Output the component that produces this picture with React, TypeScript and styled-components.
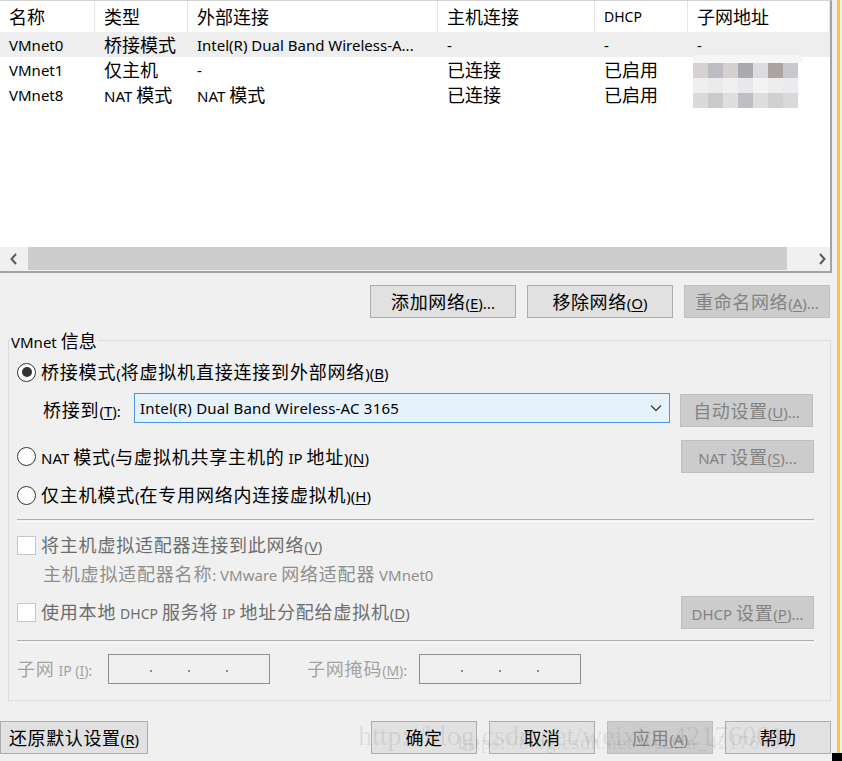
import React from 'react';
import styled, { createGlobalStyle } from 'styled-components';

const Global = createGlobalStyle`
  html, body { margin: 0; padding: 0; background: #f0f0f0; }
  body {
    font-family: "Noto Sans", "Noto Sans CJK SC", sans-serif;
    font-size: 15px;
    line-height: 22px;
    color: #000;
  }
  #root { width: 842px; height: 761px; }
`;

const Han = styled.span`
  font-family: "Noto Sans CJK SC", sans-serif;
  font-size: 18px;
  letter-spacing: var(--hs, 0px);
`;
const Small = styled.span`
  font-size: 14px;
`;
const Mn = styled.span`
  text-decoration: underline;
  text-underline-offset: 2px;
`;

const TOKEN = /(&.)|\{([^}]*)\}|([\u2e80-\u9fff\u3000-\u303f\uff00-\uffef]+)|([^&{\u2e80-\u9fff\u3000-\u303f\uff00-\uffef]+)/g;

function parse(s: string, prefix: string): React.ReactNode[] {
  const out: React.ReactNode[] = [];
  const re = new RegExp(TOKEN.source, 'g');
  let m: RegExpExecArray | null;
  let i = 0;
  while ((m = re.exec(s))) {
    const k = `${prefix}${i++}`;
    if (m[1]) out.push(<Mn key={k}>{m[1][1]}</Mn>);
    else if (m[2] !== undefined) out.push(<Small key={k}>{parse(m[2], k + '-')}</Small>);
    else if (m[3]) out.push(<Han key={k}>{m[3]}</Han>);
    else out.push(<React.Fragment key={k}>{m[4]}</React.Fragment>);
  }
  return out;
}

function Txt({ s }: { s: string }) {
  return <span>{parse(s, 't')}</span>;
}

const Page = styled.div`
  position: relative;
  display: flex;
  width: 842px;
  height: 761px;
  overflow: hidden;
`;
const Main = styled.div`
  width: 832px;
  display: flex;
  flex-direction: column;
`;
const Strip = styled.div`
  width: 10px;
  box-sizing: border-box;
  padding-left: 5px;
  display: flex;
`;
const YellowBar = styled.div`
  width: 3px;
  background: #f7c744;
`;

/* ---------- list ---------- */
const ListBox = styled.div`
  position: relative;
  height: 273px;
  box-sizing: border-box;
  background: #fff;
  border-top: 1px solid #d4d4d4;
  border-right: 2px solid #a3a3a3;
  border-bottom: 2px solid #a3a3a3;
  display: flex;
  flex-direction: column;
`;
const GridRow = styled.div<{ $h: number; $sel?: boolean }>`
  display: grid;
  grid-template-columns: 95px 93px 250px 157px 93px 1fr;
  height: ${p => p.$h}px;
  background: ${p => (p.$sel ? '#eeeeee' : 'transparent')};
  align-items: center;
`;
const HeadCell = styled.div`
  height: 100%;
  display: flex;
  align-items: center;
  padding-left: 9px;
  border-right: 1px solid #e5e5e5;
  white-space: nowrap;
`;
const Cell = styled.div`
  padding-left: 9px;
  white-space: nowrap;
`;
const ListSpacer = styled.div`
  flex: 1;
`;
const HScroll = styled.div`
  height: 24px;
  display: flex;
  background: #f0f0f0;
`;
const ScrollArrow = styled.div<{ $w: number }>`
  width: ${p => p.$w}px;
  display: flex;
  align-items: center;
  justify-content: center;
`;
const Thumb = styled.div`
  width: 759px;
  height: 23px;
  background: #cdcdcd;
`;
const Track = styled.div`
  flex: 1;
`;
const Mosaic = styled.svg`
  position: absolute;
  left: 693px;
  top: 54px;
`;

/* ---------- buttons ---------- */
const Btn = styled.button<{ $w: number }>`
  --hs: 0.6px;
  width: ${p => p.$w}px;
  height: 33px;
  box-sizing: border-box;
  background: #e1e1e1;
  border: 1px solid #adadad;
  font: inherit;
  color: #000;
  padding: 0;
  display: flex;
  align-items: center;
  justify-content: center;
  white-space: nowrap;
  &:disabled {
    background: #cccccc;
    border-color: #bfbfbf;
    color: #838383;
  }
`;
const TopButtons = styled.div`
  display: flex;
  justify-content: flex-end;
  gap: 11px;
  padding: 12px 2px 0 0;
`;

/* ---------- group ---------- */
const GroupBox = styled.div`
  --hs: 0.8px;
  position: relative;
  margin: 22px 1px 0 8px;
  border: 1px solid #dcdcdc;
  padding: 18px 16px 16px 8px;
  display: flex;
  flex-direction: column;
`;
const GroupTitle = styled.div`
  --hs: 0px;
  position: absolute;
  top: -12px;
  left: 1px;
  padding: 0 1px;
  background: #f0f0f0;
  line-height: 22px;
`;
const Row = styled.div<{ $mt: number; $h: number; $pl?: number }>`
  display: flex;
  align-items: center;
  margin-top: ${p => p.$mt}px;
  height: ${p => p.$h}px;
  padding-left: ${p => p.$pl ?? 0}px;
  white-space: nowrap;
`;
const Radio = styled.span<{ $on?: boolean }>`
  width: 19px;
  height: 19px;
  box-sizing: border-box;
  border: 1px solid #333;
  border-radius: 50%;
  background: #fff;
  display: flex;
  align-items: center;
  justify-content: center;
  margin-right: 5px;
  flex: none;
  &::after {
    content: '';
    width: 10px;
    height: 10px;
    border-radius: 50%;
    background: ${p => (p.$on ? '#333' : 'transparent')};
  }
`;
const Check = styled.span`
  width: 19px;
  height: 19px;
  box-sizing: border-box;
  border: 1px solid #c6c6c6;
  background: #fff;
  margin-right: 5px;
  flex: none;
`;
const Label = styled.span<{ $c?: string; $w?: number; $ml?: number }>`
  color: ${p => p.$c ?? '#000'};
  margin-left: ${p => p.$ml ?? 0}px;
  ${p => (p.$w ? `width: ${p.$w}px; flex: none;` : '')}
`;
const Push = styled.div`
  flex: 1;
`;
const Select = styled.div`
  width: 536px;
  height: 30px;
  box-sizing: border-box;
  border: 1px solid #4c97e0;
  background: #e5f1fb;
  display: flex;
  align-items: center;
  padding: 0 7px 0 5px;
  margin-right: 10px;
  align-self: flex-start;
`;
const SelectText = styled.span`
  flex: 1;
  letter-spacing: 0.2px;
`;
const BtnTop = styled.div`
  align-self: flex-start;
  margin-top: 1px;
`;
const Sep = styled.div<{ $mt: number }>`
  margin-top: ${p => p.$mt}px;
  height: 1px;
  border-top: 1px solid #b0b0b0;
  border-bottom: 1px solid #fbfbfb;
`;
const IpBox = styled.div`
  width: 162px;
  height: 30px;
  box-sizing: border-box;
  border: 1px solid #8f8f8f;
  display: flex;
  align-items: center;
  justify-content: center;
  gap: 36px;
  flex: none;
`;
const Dot = styled.span`
  width: 2px;
  height: 2px;
  background: #8a8a8a;
  margin-top: 4px;
`;

/* ---------- bottom ---------- */
const BottomRow = styled.div`
  display: flex;
  justify-content: space-between;
  margin-top: 20px;
  padding-right: 1px;
`;
const BtnGroup = styled.div`
  display: flex;
  gap: 12px;
`;

/* ---------- overlays ---------- */
const Watermark = styled.div<{ $l: number; $t: number; $fs: number; $ls: number }>`
  position: absolute;
  left: ${p => p.$l}px;
  top: ${p => p.$t}px;
  font-family: "Liberation Serif", serif;
  font-size: ${p => p.$fs}px;
  letter-spacing: ${p => p.$ls}px;
  line-height: 1;
  color: rgba(120, 120, 120, 0.16);
  white-space: nowrap;
  pointer-events: none;
`;
const Corner = styled.div`
  position: absolute;
  right: 0;
  bottom: 0;
  width: 10px;
  height: 8px;
  background: #000;
`;

const mosaicRows = [
  ['#d6d2d2', '#bcbdc2', '#d5d1d0', '#a9abb0', '#dddbdd', '#aaa4a4', '#c8c9ce'],
  ['#f0eff0', '#ebebee', '#f1f0f0', '#e8e8ea', '#f3f3f3', '#ededed', '#ececee'],
  ['#dbdadb', '#cacacc', '#dfdfe0', '#bebfc3', '#dedcdd', '#d0cfd1', '#d9d9dc'],
];

const Chevron = ({ dir }: { dir: 'l' | 'r' }) => (
  <svg width="10" height="14" viewBox="0 0 10 14">
    <polyline
      points={dir === 'l' ? '7,2 2.5,7 7,12' : '3,2 7.5,7 3,12'}
      fill="none"
      stroke="#5a5a5a"
      strokeWidth="2"
    />
  </svg>
);

export default function App() {
  return (
    <Page>
      <Global />
      <Main>
        <ListBox>
          <GridRow $h={31}>
            <HeadCell><Txt s="名称" /></HeadCell>
            <HeadCell><Txt s="类型" /></HeadCell>
            <HeadCell><Txt s="外部连接" /></HeadCell>
            <HeadCell><Txt s="主机连接" /></HeadCell>
            <HeadCell><Txt s="{DHCP}" /></HeadCell>
            <HeadCell><Txt s="子网地址" /></HeadCell>
          </GridRow>
          <GridRow $h={25} $sel>
            <Cell>VMnet0</Cell>
            <Cell><Txt s="桥接模式" /></Cell>
            <Cell>Intel(R) Dual Band Wireless-A...</Cell>
            <Cell>-</Cell>
            <Cell>-</Cell>
            <Cell>-</Cell>
          </GridRow>
          <GridRow $h={25}>
            <Cell>VMnet1</Cell>
            <Cell><Txt s="仅主机" /></Cell>
            <Cell>-</Cell>
            <Cell><Txt s="已连接" /></Cell>
            <Cell><Txt s="已启用" /></Cell>
            <Cell />
          </GridRow>
          <GridRow $h={25}>
            <Cell>VMnet8</Cell>
            <Cell><Txt s="NAT 模式" /></Cell>
            <Cell><Txt s="NAT 模式" /></Cell>
            <Cell><Txt s="已连接" /></Cell>
            <Cell><Txt s="已启用" /></Cell>
            <Cell />
          </GridRow>
          <ListSpacer />
          <HScroll>
            <ScrollArrow $w={28}><Chevron dir="l" /></ScrollArrow>
            <Thumb />
            <Track />
            <ScrollArrow $w={17}><Chevron dir="r" /></ScrollArrow>
          </HScroll>
          <Mosaic width="110" height="53" viewBox="0 0 110 53">
            <rect x="-4" y="0" width="114" height="8" rx="4" fill="#f6f6f6" />
            {mosaicRows.map((row, r) =>
              row.map((c, i) => (
                <rect key={`${r}-${i}`} x={i * 15} y={8 + r * 15} width="15" height="15" fill={c} />
              ))
            )}
          </Mosaic>
        </ListBox>

        <TopButtons>
          <Btn $w={146}><Txt s="添加网络(&E)..." /></Btn>
          <Btn $w={146}><Txt s="移除网络(&O)" /></Btn>
          <Btn $w={146} disabled><Txt s="重命名网络(&A)..." /></Btn>
        </TopButtons>

        <GroupBox>
          <GroupTitle><Txt s="VMnet 信息" /></GroupTitle>

          <Row $mt={1} $h={24}>
            <Radio $on />
            <Label><Txt s="桥接模式(将虚拟机直接连接到外部网络)(&B)" /></Label>
          </Row>

          <Row $mt={9} $h={34} $pl={26}>
            <Label $w={91}><Txt s="桥接到(&T):" /></Label>
            <Select>
              <SelectText>Intel(R) Dual Band Wireless-AC 3165</SelectText>
              <svg width="12" height="8" viewBox="0 0 12 8">
                <polyline points="1,1.5 6,6.5 11,1.5" fill="none" stroke="#444" strokeWidth="1.3" />
              </svg>
            </Select>
            <BtnTop>
              <Btn $w={133} disabled><Txt s="自动设置(&U)..." /></Btn>
            </BtnTop>
          </Row>

          <Row $mt={13} $h={33}>
            <Radio />
            <Label><Txt s="NAT 模式(与虚拟机共享主机的 IP 地址)(&N)" /></Label>
            <Push />
            <Btn $w={133} disabled><Txt s="NAT 设置(&S)..." /></Btn>
          </Row>

          <Row $mt={10} $h={24}>
            <Radio />
            <Label><Txt s="仅主机模式(在专用网络内连接虚拟机)(&H)" /></Label>
          </Row>

          <Sep $mt={12} />

          <Row $mt={11} $h={24}>
            <Check />
            <Label $c="#6d6d6d"><Txt s="将主机虚拟适配器连接到此网络(&V)" /></Label>
          </Row>

          <Row $mt={6} $h={22} $pl={26}>
            <Label $c="#8e8e8e"><Txt s="主机虚拟适配器名称: VMware 网络适配器 VMnet0" /></Label>
          </Row>

          <Row $mt={11} $h={33}>
            <Check />
            <Label $c="#6d6d6d"><Txt s="使用本地 {DHCP} 服务将 {IP} 地址分配给虚拟机(&D)" /></Label>
            <Push />
            <Btn $w={133} disabled><Txt s="DHCP 设置(&P)..." /></Btn>
          </Row>

          <Sep $mt={11} />

          <Row $mt={11} $h={30}>
            <Label $c="#a3a3a3" $w={91}><Txt s="子网 {IP (&I):}" /></Label>
            <IpBox><Dot /><Dot /><Dot /></IpBox>
            <Label $c="#a3a3a3" $w={112} $ml={37}><Txt s="子网掩码{(&M)}:" /></Label>
            <IpBox><Dot /><Dot /><Dot /></IpBox>
          </Row>
        </GroupBox>

        <BottomRow>
          <Btn $w={148}><Txt s="还原默认设置(&R)" /></Btn>
          <BtnGroup>
            <Btn $w={106}><Txt s="确定" /></Btn>
            <Btn $w={106}><Txt s="取消" /></Btn>
            <Btn $w={106} disabled><Txt s="应用(&A)" /></Btn>
            <Btn $w={106}><Txt s="帮助" /></Btn>
          </BtnGroup>
        </BottomRow>
      </Main>
      <Strip>
        <YellowBar />
      </Strip>
      <Watermark $l={358} $t={722} $fs={28} $ls={0}>http://blog.csdn.net/weixin_42176001</Watermark>
      <Watermark $l={458} $t={733} $fs={19} $ls={1}>https://blog.csdn.net/weixin_42176001</Watermark>
      <Corner />
    </Page>
  );
}
